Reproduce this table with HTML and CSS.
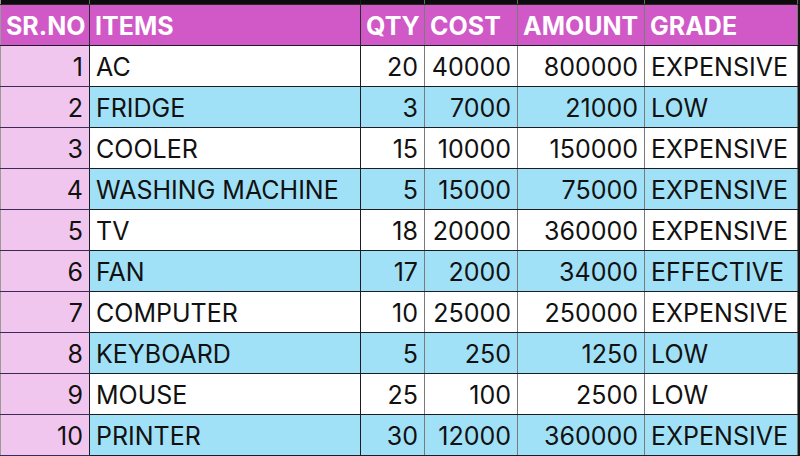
FILE: index.html
```html
<!DOCTYPE html>
<html>
<head>
<meta charset="utf-8">
<link rel="stylesheet" href="styles.css">
</head>
<body>
<table class="sheet">
  <colgroup>
    <col class="c-sr"><col class="c-item"><col class="c-qty"><col class="c-cost"><col class="c-amt"><col class="c-grade">
  </colgroup>
  <tr class="topband"><td></td><td></td><td></td><td></td><td></td><td></td></tr>
  <tr class="head">
    <th>SR.NO</th><th>ITEMS</th><th>QTY</th><th>COST</th><th>AMOUNT</th><th>GRADE</th>
  </tr>
  <tr class="odd"><td class="sr">1</td><td>AC</td><td class="num">20</td><td class="num">40000</td><td class="num">800000</td><td>EXPENSIVE</td></tr>
  <tr class="even"><td class="sr">2</td><td>FRIDGE</td><td class="num">3</td><td class="num">7000</td><td class="num">21000</td><td>LOW</td></tr>
  <tr class="odd"><td class="sr">3</td><td>COOLER</td><td class="num">15</td><td class="num">10000</td><td class="num">150000</td><td>EXPENSIVE</td></tr>
  <tr class="even"><td class="sr">4</td><td>WASHING MACHINE</td><td class="num">5</td><td class="num">15000</td><td class="num">75000</td><td>EXPENSIVE</td></tr>
  <tr class="odd"><td class="sr">5</td><td>TV</td><td class="num">18</td><td class="num">20000</td><td class="num">360000</td><td>EXPENSIVE</td></tr>
  <tr class="even"><td class="sr">6</td><td>FAN</td><td class="num">17</td><td class="num">2000</td><td class="num">34000</td><td>EFFECTIVE</td></tr>
  <tr class="odd"><td class="sr">7</td><td>COMPUTER</td><td class="num">10</td><td class="num">25000</td><td class="num">250000</td><td>EXPENSIVE</td></tr>
  <tr class="even"><td class="sr">8</td><td>KEYBOARD</td><td class="num">5</td><td class="num">250</td><td class="num">1250</td><td>LOW</td></tr>
  <tr class="odd"><td class="sr">9</td><td>MOUSE</td><td class="num">25</td><td class="num">100</td><td class="num">2500</td><td>LOW</td></tr>
  <tr class="even"><td class="sr">10</td><td>PRINTER</td><td class="num">30</td><td class="num">12000</td><td class="num">360000</td><td>EXPENSIVE</td></tr>
</table>
</body>
</html>
```

FILE: styles.css
```css
html, body {
  margin: 0;
  padding: 0;
  background: #151515;
  width: 800px;
  height: 456px;
  overflow: hidden;
}

.sheet {
  border-collapse: collapse;
  table-layout: fixed;
  width: 797px;
  font-family: Inter, Roboto, "Liberation Sans", sans-serif;
  border-left: 1px solid #9a9a9a;
}

.c-sr { width: 89px; }
.c-item { width: 271px; }
.c-qty { width: 64px; }
.c-cost { width: 93px; }
.c-amt { width: 127px; }
.c-grade { width: 153px; }

.sheet td, .sheet th {
  padding: 0 6px 0 6px;
  white-space: nowrap;
  overflow: hidden;
  border-right: 1px solid #7a7a7a;
  border-bottom: 1px solid #1c1c24;
}

.sheet .topband td {
  height: 4px;
  padding: 0;
  font-size: 0;
  line-height: 0;
  background: #0c0c0c;
  border-bottom: 1px solid #2a2a2a;
  border-right: 1px solid #6a6a6a;
}

.head th {
  height: 38px;
  padding: 2px 4px 0 5px;
  background: #d058c7;
  color: #ffffff;
  font-weight: 700;
  font-size: 25px;
  text-align: left;
  line-height: 38px;
  border-bottom: 1px solid #1c1c24;
}

.sheet td {
  height: 37.9px;
  font-size: 25px;
  line-height: 38px;
  color: #111111;
  padding-top: 2px;
}

.odd td { background: #ffffff; }
.even td { background: #a1e1f7; }

.sheet td.sr {
  background: #f0c6ee;
  text-align: right;
  border-bottom-color: #3a2a55;
  border-right-color: #1c1c24;
}

.sheet th:first-child { border-right-color: #2a2a30; }
.sheet td:nth-child(2) { border-right-color: #1c1c24; }
.head th:nth-child(2) { border-right-color: #2a2a30; }

.num { text-align: right; }
```
